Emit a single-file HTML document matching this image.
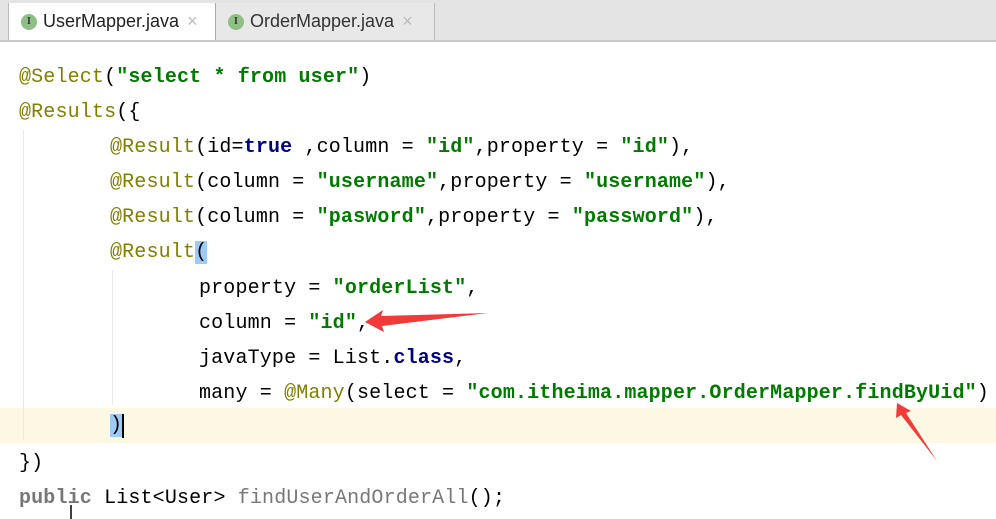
<!DOCTYPE html>
<html><head><style>
body{margin:0;width:996px;height:519px;background:#fff;overflow:hidden;position:relative;font-family:"Liberation Mono",monospace;}
.tabs{position:absolute;left:0;top:0;width:996px;height:40px;background:#e4e4e4;border-bottom:2px solid #c8c8c8;}
.tab{position:absolute;top:3px;height:37px;font-family:"Liberation Sans",sans-serif;font-size:18px;color:#222;line-height:37px;}
.ic{display:inline-block;width:16px;height:16px;border-radius:50%;background:#8fbf85;color:#333;font-size:10px;line-height:16px;text-align:center;vertical-align:middle;margin-right:6px;font-family:"Liberation Serif",serif;font-weight:bold}
.x{color:#bbb;margin-left:8px}
.l{position:absolute;font-size:20px;white-space:pre;color:#000;line-height:24px;letter-spacing:0.15px}
.a{color:#808000}.s{color:#007a00;font-weight:bold}.k{color:#000080;font-weight:bold}.g{color:#777}
.hl{position:absolute;left:0;top:408px;width:996px;height:35px;background:#fdf8e4}
.guide{position:absolute;width:1px;background:#e8e8e8}
</style></head><body>
<div class="tabs">
<div class="tab" style="left:8px;width:208px;background:#fff;border-left:1px solid #bbb;border-right:1px solid #aaa;padding-left:12px;box-sizing:border-box"><span class="ic">I</span>UserMapper.java<span class="x">×</span></div>
<div class="tab" style="left:216px;width:219px;background:#e8e8e8;border-right:1px solid #bbb;padding-left:12px;box-sizing:border-box;color:#333"><span class="ic">I</span>OrderMapper.java<span class="x">×</span></div>
</div>
<div class="hl"></div>
<div class="guide" style="left:23px;top:130px;height:310px"></div>
<div class="guide" style="left:112px;top:270px;height:135px"></div>
<div class="l" style="left:19px;top:66px"><span class="a">@Select</span>(<span class="s">"select * from user"</span>)</div>
<div class="l" style="left:19px;top:101px"><span class="a">@Results</span>({</div>
<div class="l" style="left:110px;top:136px"><span class="a">@Result</span>(id=<span class="k">true</span> ,column = <span class="s">"id"</span>,property = <span class="s">"id"</span>),</div>
<div class="l" style="left:110px;top:171px"><span class="a">@Result</span>(column = <span class="s">"username"</span>,property = <span class="s">"username"</span>),</div>
<div class="l" style="left:110px;top:206px"><span class="a">@Result</span>(column = <span class="s">"pasword"</span>,property = <span class="s">"password"</span>),</div>
<div class="l" style="left:110px;top:241px"><span class="a">@Result</span><span style="background:#9ccbf5">(</span></div>
<div class="l" style="left:199px;top:277px">property = <span class="s">"orderList"</span>,</div>
<div class="l" style="left:199px;top:312px">column = <span class="s">"id"</span>,</div>
<div class="l" style="left:199px;top:347px">javaType = List.<span class="k">class</span>,</div>
<div class="l" style="left:199px;top:382px">many = <span class="a">@Many</span>(select = <span class="s">"com.itheima.mapper.OrderMapper.findByUid"</span>)</div>
<div class="l" style="left:110px;top:414px"><span style="background:#9ccbf5">)</span><span style="display:inline-block;width:2px;height:24px;background:#000;vertical-align:top"></span></div>
<div class="l" style="left:19px;top:452px">})</div>
<div class="l" style="left:19px;top:487px"><span class="g" style="font-weight:bold">public</span> List&lt;User&gt; <span class="g">findUserAndOrderAll</span>();</div>
<svg style="position:absolute;left:0;top:0" width="996" height="519">
<polygon points="365,322 383,310 381,316 488,313 382,326 384,332" fill="#f23a3a"/>
<polygon points="897,403 911,411 906,413 937,461 901,415 896,418" fill="#f23a3a"/>
<line x1="71" y1="505" x2="71" y2="519" stroke="#000" stroke-width="1.5"/>
</svg>
</body></html>
